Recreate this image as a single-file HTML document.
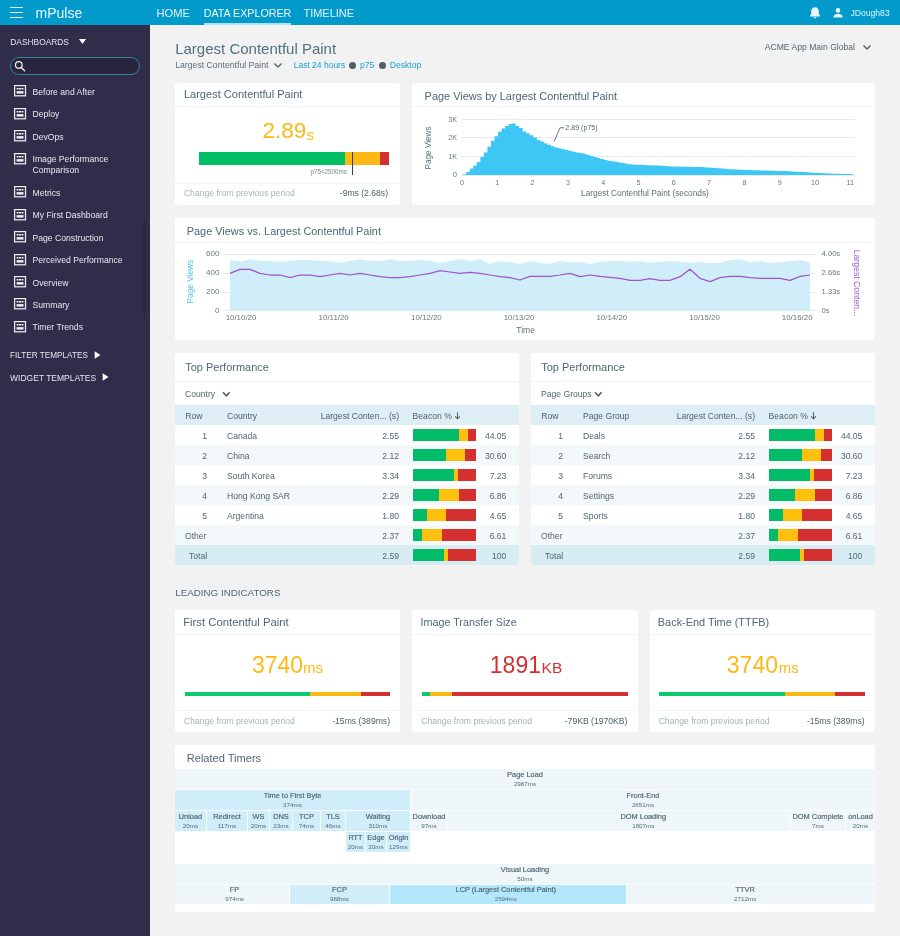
<!DOCTYPE html>
<html><head><meta charset="utf-8"><style>
html,body{margin:0;padding:0;width:900px;height:936px;overflow:hidden;background:#F2F2F2}
body{position:relative;font-family:"Liberation Sans",sans-serif}
.t{position:absolute;white-space:nowrap}
.r{position:absolute}
.card{background:#fff;border-radius:3px}
</style></head><body><div style="position:absolute;left:0;top:0;width:900px;height:936px;will-change:transform">
<div class="r" style="left:0px;top:0px;width:900px;height:25px;background:#0299CB;"></div>
<div class="r" style="left:10px;top:7px;width:13px;height:1.3px;background:#F0FAFD;"></div>
<div class="r" style="left:10px;top:12px;width:13px;height:1.3px;background:#F0FAFD;"></div>
<div class="r" style="left:10px;top:17px;width:13px;height:1.3px;background:#F0FAFD;"></div>
<div class="t" style="left:35.50px;top:6.15px;font-size:14px;line-height:14px;color:#EAF7FC;">mPulse</div>
<div class="t" style="left:156.60px;top:7.70px;font-size:11.1px;line-height:11.1px;color:#E3F5FB;">HOME</div>
<div class="t" style="left:203.80px;top:8.04px;font-size:10.7px;line-height:10.7px;color:#F2FAFD;">DATA EXPLORER</div>
<div class="t" style="left:303.50px;top:7.83px;font-size:10.95px;line-height:10.95px;color:#E3F5FB;">TIMELINE</div>
<div class="r" style="left:204px;top:23px;width:87px;height:2px;background:#A8E4FA;"></div>
<svg class="r" style="left:808px;top:6px" width="14" height="13" viewBox="0 0 14 13">
<path d="M7 1.2c-2.4 0-3.8 1.8-3.8 4.2v2.8L2 9.6v0.9h10v-0.9l-1.2-1.4V5.4C10.8 3 9.4 1.2 7 1.2z" fill="#EAF7FC"/>
<path d="M5.6 11.2h2.8c0 .8-.6 1.2-1.4 1.2s-1.4-.4-1.4-1.2z" fill="#EAF7FC"/></svg>
<svg class="r" style="left:832px;top:7px" width="12" height="12" viewBox="0 0 12 12">
<circle cx="6" cy="3.4" r="2.3" fill="#EAF7FC"/>
<path d="M1.4 10.3c0-2.2 2-3.5 4.6-3.5s4.6 1.3 4.6 3.5v0.3H1.4z" fill="#EAF7FC"/></svg>
<div class="t" style="left:850.50px;top:8.82px;font-size:8.6px;line-height:8.6px;color:#DDF2FA;">JDough83</div>
<div class="r" style="left:0px;top:25px;width:150px;height:911px;background:#302D4A;"></div>
<div class="t" style="left:10.30px;top:37.59px;font-size:8.4px;line-height:8.4px;color:#E6E5EE;">DASHBOARDS</div>
<svg class="r" style="left:78px;top:38px" width="9" height="7" viewBox="0 0 9 7"><path d="M1 1h7L4.5 6z" fill="#FFFFFF"/></svg>
<div class="r" style="left:10px;top:57px;width:128px;height:16px;border:1px solid #3B7E9C;border-radius:9px;background:#28263E"></div>
<svg class="r" style="left:13px;top:60px" width="14" height="13" viewBox="0 0 14 13"><circle cx="5.8" cy="4.9" r="3.3" fill="none" stroke="#F0F0F4" stroke-width="1.25"/><path d="M8.3 7.4L11.6 10.7" stroke="#F0F0F4" stroke-width="1.35" stroke-linecap="round"/></svg>
<svg class="r" style="left:13.7px;top:85.1px" width="13" height="12" viewBox="0 0 13 12">
<rect x="0.6" y="0.6" width="10.9" height="10.2" fill="none" stroke="#EDEDF2" stroke-width="1.25"/>
<rect x="2.6" y="3.0" width="2.0" height="1.5" fill="#EDEDF2"/><rect x="5.05" y="3.0" width="2.0" height="1.5" fill="#EDEDF2"/><rect x="7.5" y="3.0" width="2.0" height="1.5" fill="#EDEDF2"/>
<rect x="2.6" y="6.1" width="6.9" height="2.5" fill="#EDEDF2"/></svg>
<div class="t" style="left:32.50px;top:87.68px;font-size:8.65px;line-height:8.65px;color:#E8E7EF;">Before and After</div>
<svg class="r" style="left:13.7px;top:107.6px" width="13" height="12" viewBox="0 0 13 12">
<rect x="0.6" y="0.6" width="10.9" height="10.2" fill="none" stroke="#EDEDF2" stroke-width="1.25"/>
<rect x="2.6" y="3.0" width="2.0" height="1.5" fill="#EDEDF2"/><rect x="5.05" y="3.0" width="2.0" height="1.5" fill="#EDEDF2"/><rect x="7.5" y="3.0" width="2.0" height="1.5" fill="#EDEDF2"/>
<rect x="2.6" y="6.1" width="6.9" height="2.5" fill="#EDEDF2"/></svg>
<div class="t" style="left:32.50px;top:110.18px;font-size:8.65px;line-height:8.65px;color:#E8E7EF;">Deploy</div>
<svg class="r" style="left:13.7px;top:130.1px" width="13" height="12" viewBox="0 0 13 12">
<rect x="0.6" y="0.6" width="10.9" height="10.2" fill="none" stroke="#EDEDF2" stroke-width="1.25"/>
<rect x="2.6" y="3.0" width="2.0" height="1.5" fill="#EDEDF2"/><rect x="5.05" y="3.0" width="2.0" height="1.5" fill="#EDEDF2"/><rect x="7.5" y="3.0" width="2.0" height="1.5" fill="#EDEDF2"/>
<rect x="2.6" y="6.1" width="6.9" height="2.5" fill="#EDEDF2"/></svg>
<div class="t" style="left:32.50px;top:132.68px;font-size:8.65px;line-height:8.65px;color:#E8E7EF;">DevOps</div>
<svg class="r" style="left:13.7px;top:152.7px" width="13" height="12" viewBox="0 0 13 12">
<rect x="0.6" y="0.6" width="10.9" height="10.2" fill="none" stroke="#EDEDF2" stroke-width="1.25"/>
<rect x="2.6" y="3.0" width="2.0" height="1.5" fill="#EDEDF2"/><rect x="5.05" y="3.0" width="2.0" height="1.5" fill="#EDEDF2"/><rect x="7.5" y="3.0" width="2.0" height="1.5" fill="#EDEDF2"/>
<rect x="2.6" y="6.1" width="6.9" height="2.5" fill="#EDEDF2"/></svg>
<div class="t" style="left:32.50px;top:155.28px;font-size:8.65px;line-height:8.65px;color:#E8E7EF;">Image Performance</div>
<div class="t" style="left:32.50px;top:166.48px;font-size:8.65px;line-height:8.65px;color:#E8E7EF;">Comparison</div>
<svg class="r" style="left:13.7px;top:186.29999999999998px" width="13" height="12" viewBox="0 0 13 12">
<rect x="0.6" y="0.6" width="10.9" height="10.2" fill="none" stroke="#EDEDF2" stroke-width="1.25"/>
<rect x="2.6" y="3.0" width="2.0" height="1.5" fill="#EDEDF2"/><rect x="5.05" y="3.0" width="2.0" height="1.5" fill="#EDEDF2"/><rect x="7.5" y="3.0" width="2.0" height="1.5" fill="#EDEDF2"/>
<rect x="2.6" y="6.1" width="6.9" height="2.5" fill="#EDEDF2"/></svg>
<div class="t" style="left:32.50px;top:188.88px;font-size:8.65px;line-height:8.65px;color:#E8E7EF;">Metrics</div>
<svg class="r" style="left:13.7px;top:208.7px" width="13" height="12" viewBox="0 0 13 12">
<rect x="0.6" y="0.6" width="10.9" height="10.2" fill="none" stroke="#EDEDF2" stroke-width="1.25"/>
<rect x="2.6" y="3.0" width="2.0" height="1.5" fill="#EDEDF2"/><rect x="5.05" y="3.0" width="2.0" height="1.5" fill="#EDEDF2"/><rect x="7.5" y="3.0" width="2.0" height="1.5" fill="#EDEDF2"/>
<rect x="2.6" y="6.1" width="6.9" height="2.5" fill="#EDEDF2"/></svg>
<div class="t" style="left:32.50px;top:211.28px;font-size:8.65px;line-height:8.65px;color:#E8E7EF;">My First Dashboard</div>
<svg class="r" style="left:13.7px;top:231.1px" width="13" height="12" viewBox="0 0 13 12">
<rect x="0.6" y="0.6" width="10.9" height="10.2" fill="none" stroke="#EDEDF2" stroke-width="1.25"/>
<rect x="2.6" y="3.0" width="2.0" height="1.5" fill="#EDEDF2"/><rect x="5.05" y="3.0" width="2.0" height="1.5" fill="#EDEDF2"/><rect x="7.5" y="3.0" width="2.0" height="1.5" fill="#EDEDF2"/>
<rect x="2.6" y="6.1" width="6.9" height="2.5" fill="#EDEDF2"/></svg>
<div class="t" style="left:32.50px;top:233.68px;font-size:8.65px;line-height:8.65px;color:#E8E7EF;">Page Construction</div>
<svg class="r" style="left:13.7px;top:253.6px" width="13" height="12" viewBox="0 0 13 12">
<rect x="0.6" y="0.6" width="10.9" height="10.2" fill="none" stroke="#EDEDF2" stroke-width="1.25"/>
<rect x="2.6" y="3.0" width="2.0" height="1.5" fill="#EDEDF2"/><rect x="5.05" y="3.0" width="2.0" height="1.5" fill="#EDEDF2"/><rect x="7.5" y="3.0" width="2.0" height="1.5" fill="#EDEDF2"/>
<rect x="2.6" y="6.1" width="6.9" height="2.5" fill="#EDEDF2"/></svg>
<div class="t" style="left:32.50px;top:256.18px;font-size:8.65px;line-height:8.65px;color:#E8E7EF;">Perceived Performance</div>
<svg class="r" style="left:13.7px;top:276.0px" width="13" height="12" viewBox="0 0 13 12">
<rect x="0.6" y="0.6" width="10.9" height="10.2" fill="none" stroke="#EDEDF2" stroke-width="1.25"/>
<rect x="2.6" y="3.0" width="2.0" height="1.5" fill="#EDEDF2"/><rect x="5.05" y="3.0" width="2.0" height="1.5" fill="#EDEDF2"/><rect x="7.5" y="3.0" width="2.0" height="1.5" fill="#EDEDF2"/>
<rect x="2.6" y="6.1" width="6.9" height="2.5" fill="#EDEDF2"/></svg>
<div class="t" style="left:32.50px;top:278.58px;font-size:8.65px;line-height:8.65px;color:#E8E7EF;">Overview</div>
<svg class="r" style="left:13.7px;top:298.40000000000003px" width="13" height="12" viewBox="0 0 13 12">
<rect x="0.6" y="0.6" width="10.9" height="10.2" fill="none" stroke="#EDEDF2" stroke-width="1.25"/>
<rect x="2.6" y="3.0" width="2.0" height="1.5" fill="#EDEDF2"/><rect x="5.05" y="3.0" width="2.0" height="1.5" fill="#EDEDF2"/><rect x="7.5" y="3.0" width="2.0" height="1.5" fill="#EDEDF2"/>
<rect x="2.6" y="6.1" width="6.9" height="2.5" fill="#EDEDF2"/></svg>
<div class="t" style="left:32.50px;top:300.98px;font-size:8.65px;line-height:8.65px;color:#E8E7EF;">Summary</div>
<svg class="r" style="left:13.7px;top:320.90000000000003px" width="13" height="12" viewBox="0 0 13 12">
<rect x="0.6" y="0.6" width="10.9" height="10.2" fill="none" stroke="#EDEDF2" stroke-width="1.25"/>
<rect x="2.6" y="3.0" width="2.0" height="1.5" fill="#EDEDF2"/><rect x="5.05" y="3.0" width="2.0" height="1.5" fill="#EDEDF2"/><rect x="7.5" y="3.0" width="2.0" height="1.5" fill="#EDEDF2"/>
<rect x="2.6" y="6.1" width="6.9" height="2.5" fill="#EDEDF2"/></svg>
<div class="t" style="left:32.50px;top:323.48px;font-size:8.65px;line-height:8.65px;color:#E8E7EF;">Timer Trends</div>
<div class="t" style="left:10.10px;top:351.86px;font-size:8.2px;line-height:8.2px;color:#E6E5EE;">FILTER TEMPLATES</div>
<svg class="r" style="left:94px;top:351px" width="7" height="8" viewBox="0 0 7 8"><path d="M0.7 0.3v7.4L6.5 4z" fill="#FFFFFF"/></svg>
<div class="t" style="left:10.10px;top:373.60px;font-size:8.5px;line-height:8.5px;color:#E6E5EE;">WIDGET TEMPLATES</div>
<svg class="r" style="left:101.5px;top:373px" width="7" height="8" viewBox="0 0 7 8"><path d="M0.7 0.3v7.4L6.5 4z" fill="#FFFFFF"/></svg>
<div class="r" style="left:143px;top:219px;width:3px;height:99px;background:#2A2841;border-radius:1.5px"></div>
<div class="r" style="left:150px;top:25px;width:750px;height:911px;background:#F2F2F2;"></div>
<div class="t" style="left:175.20px;top:41.30px;font-size:15px;line-height:15px;color:#52707E;">Largest Contentful Paint</div>
<div class="t" style="left:175.20px;top:60.93px;font-size:8.7px;line-height:8.7px;color:#5A6E78;">Largest Contentful Paint</div>
<svg class="r" style="left:273px;top:62px" width="10" height="7" viewBox="0 0 10 7"><path d="M1.5 1.5L5 5l3.5-3.5" fill="none" stroke="#55666F" stroke-width="1.4"/></svg>
<div class="t" style="left:293.70px;top:61.10px;font-size:8.5px;line-height:8.5px;color:#1B9FD3;">Last 24 hours</div>
<div class="r" style="left:349px;top:61.5px;width:7px;height:7px;border-radius:50%;background:#4E5E67"></div>
<div class="t" style="left:360.00px;top:61.10px;font-size:8.5px;line-height:8.5px;color:#1B9FD3;">p75</div>
<div class="r" style="left:378.7px;top:61.5px;width:7px;height:7px;border-radius:50%;background:#4E5E67"></div>
<div class="t" style="left:389.70px;top:61.02px;font-size:8.6px;line-height:8.6px;color:#1B9FD3;">Desktop</div>
<div class="t" style="left:455.00px;width:400px;text-align:right;top:43.42px;font-size:8.6px;line-height:8.6px;color:#55676F;">ACME App Main Global</div>
<svg class="r" style="left:862px;top:44px" width="10" height="7" viewBox="0 0 10 7"><path d="M1.5 1.5L5 5l3.5-3.5" fill="none" stroke="#55666F" stroke-width="1.5"/></svg>
<div class="r card" style="left:175px;top:83px;width:225px;height:122px"></div>
<div class="t" style="left:183.90px;top:88.64px;font-size:11.05px;line-height:11.05px;color:#4D6876;">Largest Contentful Paint</div>
<div class="r" style="left:175px;top:106px;width:225px;height:1px;background:#F1F3F4;"></div>
<div class="t" style="left:262.50px;top:120.45px;font-size:22.5px;line-height:22.5px;color:#FDB913;">2.89</div>
<div class="t" style="left:306.50px;top:126.80px;font-size:15px;line-height:15px;color:#FDB913;">s</div>
<div class="r" style="left:199px;top:152px;width:145.5px;height:12.5px;background:#00BE64;"></div>
<div class="r" style="left:344.5px;top:152px;width:35px;height:12.5px;background:#FDB913;"></div>
<div class="r" style="left:379.5px;top:152px;width:9.5px;height:12.5px;background:#D3302F;"></div>
<div class="r" style="left:352px;top:152px;width:1px;height:22.5px;background:#33404A;"></div>
<div class="t" style="left:-53.00px;width:400px;text-align:right;top:168.67px;font-size:6.3px;line-height:6.3px;color:#7B8A92;">p75&lt;2500ms</div>
<div class="r" style="left:175px;top:183px;width:225px;height:1px;background:#F3F5F6;"></div>
<div class="t" style="left:183.90px;top:189.22px;font-size:8.6px;line-height:8.6px;color:#A3B3BB;">Change from previous period</div>
<div class="t" style="left:-12.00px;width:400px;text-align:right;top:189.22px;font-size:8.6px;line-height:8.6px;color:#4F616B;">-9ms (2.68s)</div>
<div class="r card" style="left:412px;top:83px;width:463px;height:122px"></div>
<div class="t" style="left:424.60px;top:91.03px;font-size:10.95px;line-height:10.95px;color:#4D6876;">Page Views by Largest Contentful Paint</div>
<div class="r" style="left:412px;top:106px;width:463px;height:1px;background:#F1F3F4;"></div>
<div class="r" style="left:461px;top:174.5px;width:394px;height:1px;background:#E6ECEF;"></div>
<div class="t" style="left:57.00px;width:400px;text-align:right;top:171.40px;font-size:7.2px;line-height:7.2px;color:#667882;">0</div>
<div class="r" style="left:461px;top:156.0px;width:394px;height:1px;background:#E6ECEF;"></div>
<div class="t" style="left:57.00px;width:400px;text-align:right;top:152.77px;font-size:7.2px;line-height:7.2px;color:#667882;">1K</div>
<div class="r" style="left:461px;top:137.0px;width:394px;height:1px;background:#E6ECEF;"></div>
<div class="t" style="left:57.00px;width:400px;text-align:right;top:134.14px;font-size:7.2px;line-height:7.2px;color:#667882;">2K</div>
<div class="r" style="left:461px;top:118.5px;width:394px;height:1px;background:#E6ECEF;"></div>
<div class="t" style="left:57.00px;width:400px;text-align:right;top:115.51px;font-size:7.2px;line-height:7.2px;color:#667882;">3K</div>
<div class="t" style="left:262.00px;width:400px;text-align:center;top:178.50px;font-size:7.2px;line-height:7.2px;color:#667882;">0</div>
<div class="t" style="left:297.30px;width:400px;text-align:center;top:178.50px;font-size:7.2px;line-height:7.2px;color:#667882;">1</div>
<div class="t" style="left:332.60px;width:400px;text-align:center;top:178.50px;font-size:7.2px;line-height:7.2px;color:#667882;">2</div>
<div class="t" style="left:367.90px;width:400px;text-align:center;top:178.50px;font-size:7.2px;line-height:7.2px;color:#667882;">3</div>
<div class="t" style="left:403.20px;width:400px;text-align:center;top:178.50px;font-size:7.2px;line-height:7.2px;color:#667882;">4</div>
<div class="t" style="left:438.50px;width:400px;text-align:center;top:178.50px;font-size:7.2px;line-height:7.2px;color:#667882;">5</div>
<div class="t" style="left:473.80px;width:400px;text-align:center;top:178.50px;font-size:7.2px;line-height:7.2px;color:#667882;">6</div>
<div class="t" style="left:509.10px;width:400px;text-align:center;top:178.50px;font-size:7.2px;line-height:7.2px;color:#667882;">7</div>
<div class="t" style="left:544.40px;width:400px;text-align:center;top:178.50px;font-size:7.2px;line-height:7.2px;color:#667882;">8</div>
<div class="t" style="left:579.70px;width:400px;text-align:center;top:178.50px;font-size:7.2px;line-height:7.2px;color:#667882;">9</div>
<div class="t" style="left:615.00px;width:400px;text-align:center;top:178.50px;font-size:7.2px;line-height:7.2px;color:#667882;">10</div>
<div class="t" style="left:650.30px;width:400px;text-align:center;top:178.50px;font-size:7.2px;line-height:7.2px;color:#667882;">11</div>
<div class="t" style="left:445.00px;width:400px;text-align:center;top:188.97px;font-size:8.3px;line-height:8.3px;color:#5E717B;">Largest Contentful Paint (seconds)</div>
<div class="t" style="left:407.5px;top:145.3px;width:40px;height:9px;font-size:8.2px;line-height:9px;color:#5E717B;text-align:center;transform:rotate(-90deg);transform-origin:20px 4.5px;width:40px;left:407.5px">Page Views</div>
<svg class="r" style="left:0;top:0" width="900" height="936"><polygon points="462.71,174.90 462.71,174.32 466.24,174.32 466.24,172.11 469.77,172.11 469.77,168.53 473.30,168.53 473.30,165.55 476.83,165.55 476.83,162.12 480.36,162.12 480.36,157.09 483.89,157.09 483.89,152.51 487.42,152.51 487.42,146.69 490.95,146.69 490.95,140.96 494.48,140.96 494.48,136.15 498.01,136.15 498.01,131.75 501.54,131.75 501.54,128.51 505.07,128.51 505.07,125.90 508.60,125.90 508.60,124.11 512.13,124.11 512.13,123.48 515.66,123.48 515.66,126.05 519.19,126.05 519.19,128.08 522.72,128.08 522.72,131.49 526.25,131.49 526.25,133.17 529.78,133.17 529.78,135.34 533.31,135.34 533.31,137.60 536.84,137.60 536.84,140.01 540.37,140.01 540.37,141.59 543.90,141.59 543.90,143.17 547.43,143.17 547.43,144.73 550.96,144.73 550.96,146.30 554.49,146.30 554.49,147.39 558.02,147.39 558.02,148.29 561.55,148.29 561.55,149.18 565.08,149.18 565.08,150.05 568.61,150.05 568.61,150.92 572.14,150.92 572.14,151.74 575.67,151.74 575.67,152.38 579.20,152.38 579.20,153.02 582.73,153.02 582.73,153.66 586.26,153.66 586.26,154.65 589.79,154.65 589.79,155.79 593.32,155.79 593.32,156.93 596.85,156.93 596.85,158.01 600.38,158.01 600.38,159.06 603.91,159.06 603.91,160.05 607.44,160.05 607.44,160.64 610.97,160.64 610.97,161.23 614.50,161.23 614.50,161.81 618.03,161.81 618.03,162.42 621.56,162.42 621.56,163.04 625.09,163.04 625.09,163.66 628.62,163.66 628.62,164.28 632.15,164.28 632.15,164.47 635.68,164.47 635.68,164.65 639.21,164.65 639.21,164.84 642.74,164.84 642.74,165.03 646.27,165.03 646.27,165.16 649.80,165.16 649.80,165.29 653.33,165.29 653.33,165.42 656.86,165.42 656.86,165.55 660.39,165.55 660.39,165.76 663.92,165.76 663.92,166.01 667.45,166.01 667.45,166.26 670.98,166.26 670.98,166.39 674.51,166.39 674.51,166.47 678.04,166.47 678.04,166.55 681.57,166.55 681.57,166.64 685.10,166.64 685.10,166.72 688.63,166.72 688.63,166.80 692.16,166.80 692.16,166.88 695.69,166.88 695.69,166.97 699.22,166.97 699.22,167.05 702.75,167.05 702.75,167.24 706.28,167.24 706.28,167.47 709.81,167.47 709.81,167.70 713.34,167.70 713.34,167.94 716.87,167.94 716.87,168.22 720.40,168.22 720.40,168.53 723.93,168.53 723.93,168.85 727.46,168.85 727.46,169.14 730.99,169.14 730.99,169.30 734.52,169.30 734.52,169.47 738.05,169.47 738.05,169.63 741.58,169.63 741.58,169.79 745.11,169.79 745.11,169.96 748.64,169.96 748.64,170.10 752.17,170.10 752.17,170.20 755.70,170.20 755.70,170.30 759.23,170.30 759.23,170.40 762.76,170.40 762.76,170.50 766.29,170.50 766.29,170.60 769.82,170.60 769.82,170.71 773.35,170.71 773.35,170.81 776.88,170.81 776.88,170.91 780.41,170.91 780.41,171.01 783.94,171.01 783.94,171.11 787.47,171.11 787.47,171.25 791.00,171.25 791.00,171.45 794.53,171.45 794.53,171.64 798.06,171.64 798.06,171.84 801.59,171.84 801.59,172.04 805.12,172.04 805.12,172.23 808.65,172.23 808.65,172.43 812.18,172.43 812.18,172.63 815.71,172.63 815.71,172.83 819.24,172.83 819.24,173.03 822.77,173.03 822.77,173.23 826.30,173.23 826.30,173.42 829.83,173.42 829.83,173.57 833.36,173.57 833.36,173.72 836.89,173.72 836.89,173.87 840.42,173.87 840.42,173.98 843.95,173.98 843.95,174.04 847.48,174.04 847.48,174.09 851.01,174.09 851.01,174.14 853.83,174.14 853.83,174.90" fill="#3EC7F4"/><path d="M554.1 141.6L560 127.8H564.1" fill="none" stroke="#55666F" stroke-width="0.9"/></svg>
<div class="t" style="left:565.30px;top:124.89px;font-size:7.1px;line-height:7.1px;color:#55666F;">2.89 (p75)</div>
<div class="r card" style="left:175px;top:218px;width:700px;height:122px"></div>
<div class="t" style="left:186.80px;top:226.07px;font-size:10.9px;line-height:10.9px;color:#4D6876;">Page Views vs. Largest Contentful Paint</div>
<div class="r" style="left:175px;top:242px;width:700px;height:1px;background:#F1F3F4;"></div>
<div class="r" style="left:222.8px;top:310.0px;width:593.2px;height:1px;background:#E6ECEF;"></div>
<div class="t" style="left:-180.60px;width:400px;text-align:right;top:306.74px;font-size:8.1px;line-height:8.1px;color:#667882;">0</div>
<div class="t" style="left:821.60px;top:307.07px;font-size:7.6px;line-height:7.6px;color:#667882;">0s</div>
<div class="r" style="left:222.8px;top:291.5px;width:593.2px;height:1px;background:#E6ECEF;"></div>
<div class="t" style="left:-180.60px;width:400px;text-align:right;top:287.84px;font-size:8.1px;line-height:8.1px;color:#667882;">200</div>
<div class="t" style="left:821.60px;top:288.17px;font-size:7.6px;line-height:7.6px;color:#667882;">1.33s</div>
<div class="r" style="left:222.8px;top:272.5px;width:593.2px;height:1px;background:#E6ECEF;"></div>
<div class="t" style="left:-180.60px;width:400px;text-align:right;top:268.94px;font-size:8.1px;line-height:8.1px;color:#667882;">400</div>
<div class="t" style="left:821.60px;top:269.27px;font-size:7.6px;line-height:7.6px;color:#667882;">2.66s</div>
<div class="r" style="left:222.8px;top:253.5px;width:593.2px;height:1px;background:#E6ECEF;"></div>
<div class="t" style="left:-180.60px;width:400px;text-align:right;top:250.04px;font-size:8.1px;line-height:8.1px;color:#667882;">600</div>
<div class="t" style="left:821.60px;top:250.37px;font-size:7.6px;line-height:7.6px;color:#667882;">4.00s</div>
<svg class="r" style="left:0;top:0" width="900" height="936"><polygon points="230,310.7 230,260 240,261.7 250,259.3 260,260.7 270,261.3 280,261.7 290,261 300,260 310,260 320,260.7 330,261.3 340,262.7 350,260.7 360,259.3 370,260.7 380,261.3 390,259.3 400,261.3 410,261 420,260 430,261 440,262.7 450,261 460,259.3 470,261 480,259.3 490,264 500,261 510,262.3 520,264 530,261 540,262.7 550,264 560,261 570,262.3 580,261.7 590,264 600,261.7 610,261 620,261 630,261.7 640,261 650,262.7 660,261.7 670,261 680,261.7 690,262.7 700,261.7 710,263.3 720,262.7 730,260 740,259.3 750,262.3 760,261 770,262.7 780,262.3 790,261 800,260 810,262.3 810,310.7" fill="#CFEEFA"/><polyline points="230,273.3 240,269.3 250,269.3 260,273.3 270,275 280,275 290,277.7 300,275 310,275 320,276.7 330,275 340,273.3 350,275 360,273.3 370,275 380,276.7 390,277.7 400,277.7 410,276.7 420,275 430,273.3 440,270.7 450,272 460,273.3 470,272.3 480,273.3 490,275 500,276.7 510,277.7 520,280 530,276.3 540,276.3 550,276.3 560,275 570,273.3 580,276.7 590,275 600,276.3 610,277.3 620,278.3 630,280.3 640,280.3 650,278.7 660,280.3 670,280.3 680,276.7 690,269.3 700,278.3 710,281.7 720,277.7 730,276.3 740,276.3 750,277.7 760,278.3 770,278.3 780,278.3 790,280.3 800,276.3 810,275" fill="none" stroke="#A052C8" stroke-width="1.25" stroke-linejoin="round"/></svg>
<div class="t" style="left:41.00px;width:400px;text-align:center;top:313.61px;font-size:7.9px;line-height:7.9px;color:#667882;">10/10/20</div>
<div class="t" style="left:133.70px;width:400px;text-align:center;top:313.61px;font-size:7.9px;line-height:7.9px;color:#667882;">10/11/20</div>
<div class="t" style="left:226.40px;width:400px;text-align:center;top:313.61px;font-size:7.9px;line-height:7.9px;color:#667882;">10/12/20</div>
<div class="t" style="left:319.10px;width:400px;text-align:center;top:313.61px;font-size:7.9px;line-height:7.9px;color:#667882;">10/13/20</div>
<div class="t" style="left:411.80px;width:400px;text-align:center;top:313.61px;font-size:7.9px;line-height:7.9px;color:#667882;">10/14/20</div>
<div class="t" style="left:504.50px;width:400px;text-align:center;top:313.61px;font-size:7.9px;line-height:7.9px;color:#667882;">10/15/20</div>
<div class="t" style="left:597.20px;width:400px;text-align:center;top:313.61px;font-size:7.9px;line-height:7.9px;color:#667882;">10/16/20</div>
<div class="t" style="left:325.60px;width:400px;text-align:center;top:326.10px;font-size:8.5px;line-height:8.5px;color:#5E717B;">Time</div>
<div class="t" style="left:170px;top:279.1px;width:40px;height:9px;font-size:8.3px;line-height:9px;color:#4FC3F0;text-align:center;transform:rotate(-90deg);transform-origin:20px 4.5px">Page Views</div>
<div class="t" style="left:817px;top:278px;width:80px;height:10px;font-size:8.7px;line-height:10px;color:#A45BD0;text-align:center;transform:rotate(90deg);transform-origin:40px 5px">Largest Conten...</div>
<div class="r card" style="left:175px;top:353px;width:344px;height:212px;overflow:hidden">
<div class="r" style="left:0;top:52px;width:344px;height:20px;background:#DEEEF5"></div><div class="r" style="left:0;top:92px;width:344px;height:20px;background:#F3F8FB"></div><div class="r" style="left:0;top:132px;width:344px;height:20px;background:#F3F8FB"></div><div class="r" style="left:0;top:172px;width:344px;height:20px;background:#F3F8FB"></div><div class="r" style="left:0;top:192px;width:344px;height:20px;background:#D8ECF3"></div>
</div>
<div class="t" style="left:185.20px;top:361.99px;font-size:11.0px;line-height:11.0px;color:#4D6876;">Top Performance</div>
<div class="r" style="left:175px;top:381px;width:344px;height:1px;background:#F1F3F4;"></div>
<div class="t" style="left:185.00px;top:389.82px;font-size:8.6px;line-height:8.6px;color:#52656F;">Country</div>
<svg class="r" style="left:222.4px;top:391px" width="9" height="7" viewBox="0 0 9 7"><path d="M1 1.2L4.3 4.8 7.6 1.2" fill="none" stroke="#4A5D67" stroke-width="1.5"/></svg>
<div class="t" style="left:185.30px;top:411.82px;font-size:8.6px;line-height:8.6px;color:#4E626C;">Row</div>
<div class="t" style="left:227.00px;top:411.82px;font-size:8.6px;line-height:8.6px;color:#4E626C;">Country</div>
<div class="t" style="left:-1.00px;width:400px;text-align:right;top:411.82px;font-size:8.6px;line-height:8.6px;color:#4E626C;">Largest Conten... (s)</div>
<div class="t" style="left:412.60px;top:411.82px;font-size:8.6px;line-height:8.6px;color:#4E626C;">Beacon %</div>
<svg class="r" style="left:453.6px;top:412px" width="7" height="8" viewBox="0 0 7 8"><path d="M3.5 0.2V6.8M1.1 4.3L3.5 6.8 5.9 4.3" fill="none" stroke="#4E626C" stroke-width="1.05"/></svg>
<div class="t" style="left:-192.90px;width:400px;text-align:right;top:431.62px;font-size:8.6px;line-height:8.6px;color:#52656F;">1</div>
<div class="t" style="left:227.00px;top:431.62px;font-size:8.6px;line-height:8.6px;color:#52656F;">Canada</div>
<div class="t" style="left:-1.00px;width:400px;text-align:right;top:431.62px;font-size:8.6px;line-height:8.6px;color:#52656F;">2.55</div>
<div class="r" style="left:412.7px;top:429px;width:46px;height:12px;background:#02BC68;"></div>
<div class="r" style="left:458.7px;top:429px;width:9px;height:12px;background:#FEC00C;"></div>
<div class="r" style="left:467.7px;top:429px;width:8px;height:12px;background:#D43030;"></div>
<div class="t" style="left:106.40px;width:400px;text-align:right;top:431.62px;font-size:8.6px;line-height:8.6px;color:#52656F;">44.05</div>
<div class="t" style="left:-192.90px;width:400px;text-align:right;top:451.62px;font-size:8.6px;line-height:8.6px;color:#52656F;">2</div>
<div class="t" style="left:227.00px;top:451.62px;font-size:8.6px;line-height:8.6px;color:#52656F;">China</div>
<div class="t" style="left:-1.00px;width:400px;text-align:right;top:451.62px;font-size:8.6px;line-height:8.6px;color:#52656F;">2.12</div>
<div class="r" style="left:412.7px;top:449px;width:33px;height:12px;background:#02BC68;"></div>
<div class="r" style="left:445.7px;top:449px;width:19.4px;height:12px;background:#FEC00C;"></div>
<div class="r" style="left:465.1px;top:449px;width:10.6px;height:12px;background:#D43030;"></div>
<div class="t" style="left:106.40px;width:400px;text-align:right;top:451.62px;font-size:8.6px;line-height:8.6px;color:#52656F;">30.60</div>
<div class="t" style="left:-192.90px;width:400px;text-align:right;top:471.62px;font-size:8.6px;line-height:8.6px;color:#52656F;">3</div>
<div class="t" style="left:227.00px;top:471.62px;font-size:8.6px;line-height:8.6px;color:#52656F;">South Korea</div>
<div class="t" style="left:-1.00px;width:400px;text-align:right;top:471.62px;font-size:8.6px;line-height:8.6px;color:#52656F;">3.34</div>
<div class="r" style="left:412.7px;top:469px;width:41.2px;height:12px;background:#02BC68;"></div>
<div class="r" style="left:453.9px;top:469px;width:4px;height:12px;background:#FEC00C;"></div>
<div class="r" style="left:457.9px;top:469px;width:17.8px;height:12px;background:#D43030;"></div>
<div class="t" style="left:106.40px;width:400px;text-align:right;top:471.62px;font-size:8.6px;line-height:8.6px;color:#52656F;">7.23</div>
<div class="t" style="left:-192.90px;width:400px;text-align:right;top:491.62px;font-size:8.6px;line-height:8.6px;color:#52656F;">4</div>
<div class="t" style="left:227.00px;top:491.62px;font-size:8.6px;line-height:8.6px;color:#52656F;">Hong Kong SAR</div>
<div class="t" style="left:-1.00px;width:400px;text-align:right;top:491.62px;font-size:8.6px;line-height:8.6px;color:#52656F;">2.29</div>
<div class="r" style="left:412.7px;top:489px;width:26.4px;height:12px;background:#02BC68;"></div>
<div class="r" style="left:439.1px;top:489px;width:19.6px;height:12px;background:#FEC00C;"></div>
<div class="r" style="left:458.7px;top:489px;width:17px;height:12px;background:#D43030;"></div>
<div class="t" style="left:106.40px;width:400px;text-align:right;top:491.62px;font-size:8.6px;line-height:8.6px;color:#52656F;">6.86</div>
<div class="t" style="left:-192.90px;width:400px;text-align:right;top:511.62px;font-size:8.6px;line-height:8.6px;color:#52656F;">5</div>
<div class="t" style="left:227.00px;top:511.62px;font-size:8.6px;line-height:8.6px;color:#52656F;">Argentina</div>
<div class="t" style="left:-1.00px;width:400px;text-align:right;top:511.62px;font-size:8.6px;line-height:8.6px;color:#52656F;">1.80</div>
<div class="r" style="left:412.7px;top:509px;width:14.4px;height:12px;background:#02BC68;"></div>
<div class="r" style="left:427.1px;top:509px;width:18.8px;height:12px;background:#FEC00C;"></div>
<div class="r" style="left:445.9px;top:509px;width:29.8px;height:12px;background:#D43030;"></div>
<div class="t" style="left:106.40px;width:400px;text-align:right;top:511.62px;font-size:8.6px;line-height:8.6px;color:#52656F;">4.65</div>
<div class="t" style="left:185.00px;top:531.62px;font-size:8.6px;line-height:8.6px;color:#52656F;">Other</div>
<div class="t" style="left:-1.00px;width:400px;text-align:right;top:531.62px;font-size:8.6px;line-height:8.6px;color:#52656F;">2.37</div>
<div class="r" style="left:412.7px;top:529px;width:9.2px;height:12px;background:#02BC68;"></div>
<div class="r" style="left:421.9px;top:529px;width:20px;height:12px;background:#FEC00C;"></div>
<div class="r" style="left:441.9px;top:529px;width:33.8px;height:12px;background:#D43030;"></div>
<div class="t" style="left:106.40px;width:400px;text-align:right;top:531.62px;font-size:8.6px;line-height:8.6px;color:#52656F;">6.61</div>
<div class="t" style="left:189.00px;top:551.62px;font-size:8.6px;line-height:8.6px;color:#52656F;">Total</div>
<div class="t" style="left:-1.00px;width:400px;text-align:right;top:551.62px;font-size:8.6px;line-height:8.6px;color:#52656F;">2.59</div>
<div class="r" style="left:413.2px;top:549px;width:30.8px;height:12px;background:#02BC68;"></div>
<div class="r" style="left:444.0px;top:549px;width:4px;height:12px;background:#FEC00C;"></div>
<div class="r" style="left:448.0px;top:549px;width:28.2px;height:12px;background:#D43030;"></div>
<div class="t" style="left:106.40px;width:400px;text-align:right;top:551.62px;font-size:8.6px;line-height:8.6px;color:#52656F;">100</div>
<div class="r card" style="left:531px;top:353px;width:344px;height:212px;overflow:hidden">
<div class="r" style="left:0;top:52px;width:344px;height:20px;background:#DEEEF5"></div><div class="r" style="left:0;top:92px;width:344px;height:20px;background:#F3F8FB"></div><div class="r" style="left:0;top:132px;width:344px;height:20px;background:#F3F8FB"></div><div class="r" style="left:0;top:172px;width:344px;height:20px;background:#F3F8FB"></div><div class="r" style="left:0;top:192px;width:344px;height:20px;background:#D8ECF3"></div>
</div>
<div class="t" style="left:541.20px;top:361.99px;font-size:11.0px;line-height:11.0px;color:#4D6876;">Top Performance</div>
<div class="r" style="left:531px;top:381px;width:344px;height:1px;background:#F1F3F4;"></div>
<div class="t" style="left:541.00px;top:389.82px;font-size:8.6px;line-height:8.6px;color:#52656F;">Page Groups</div>
<svg class="r" style="left:594.4px;top:391px" width="9" height="7" viewBox="0 0 9 7"><path d="M1 1.2L4.3 4.8 7.6 1.2" fill="none" stroke="#4A5D67" stroke-width="1.5"/></svg>
<div class="t" style="left:541.30px;top:411.82px;font-size:8.6px;line-height:8.6px;color:#4E626C;">Row</div>
<div class="t" style="left:583.00px;top:411.82px;font-size:8.6px;line-height:8.6px;color:#4E626C;">Page Group</div>
<div class="t" style="left:355.00px;width:400px;text-align:right;top:411.82px;font-size:8.6px;line-height:8.6px;color:#4E626C;">Largest Conten... (s)</div>
<div class="t" style="left:768.60px;top:411.82px;font-size:8.6px;line-height:8.6px;color:#4E626C;">Beacon %</div>
<svg class="r" style="left:809.6px;top:412px" width="7" height="8" viewBox="0 0 7 8"><path d="M3.5 0.2V6.8M1.1 4.3L3.5 6.8 5.9 4.3" fill="none" stroke="#4E626C" stroke-width="1.05"/></svg>
<div class="t" style="left:163.10px;width:400px;text-align:right;top:431.62px;font-size:8.6px;line-height:8.6px;color:#52656F;">1</div>
<div class="t" style="left:583.00px;top:431.62px;font-size:8.6px;line-height:8.6px;color:#52656F;">Deals</div>
<div class="t" style="left:355.00px;width:400px;text-align:right;top:431.62px;font-size:8.6px;line-height:8.6px;color:#52656F;">2.55</div>
<div class="r" style="left:768.7px;top:429px;width:46px;height:12px;background:#02BC68;"></div>
<div class="r" style="left:814.7px;top:429px;width:9px;height:12px;background:#FEC00C;"></div>
<div class="r" style="left:823.7px;top:429px;width:8px;height:12px;background:#D43030;"></div>
<div class="t" style="left:462.40px;width:400px;text-align:right;top:431.62px;font-size:8.6px;line-height:8.6px;color:#52656F;">44.05</div>
<div class="t" style="left:163.10px;width:400px;text-align:right;top:451.62px;font-size:8.6px;line-height:8.6px;color:#52656F;">2</div>
<div class="t" style="left:583.00px;top:451.62px;font-size:8.6px;line-height:8.6px;color:#52656F;">Search</div>
<div class="t" style="left:355.00px;width:400px;text-align:right;top:451.62px;font-size:8.6px;line-height:8.6px;color:#52656F;">2.12</div>
<div class="r" style="left:768.7px;top:449px;width:33px;height:12px;background:#02BC68;"></div>
<div class="r" style="left:801.7px;top:449px;width:19.4px;height:12px;background:#FEC00C;"></div>
<div class="r" style="left:821.1px;top:449px;width:10.6px;height:12px;background:#D43030;"></div>
<div class="t" style="left:462.40px;width:400px;text-align:right;top:451.62px;font-size:8.6px;line-height:8.6px;color:#52656F;">30.60</div>
<div class="t" style="left:163.10px;width:400px;text-align:right;top:471.62px;font-size:8.6px;line-height:8.6px;color:#52656F;">3</div>
<div class="t" style="left:583.00px;top:471.62px;font-size:8.6px;line-height:8.6px;color:#52656F;">Forums</div>
<div class="t" style="left:355.00px;width:400px;text-align:right;top:471.62px;font-size:8.6px;line-height:8.6px;color:#52656F;">3.34</div>
<div class="r" style="left:768.7px;top:469px;width:41.2px;height:12px;background:#02BC68;"></div>
<div class="r" style="left:809.9px;top:469px;width:4px;height:12px;background:#FEC00C;"></div>
<div class="r" style="left:813.9px;top:469px;width:17.8px;height:12px;background:#D43030;"></div>
<div class="t" style="left:462.40px;width:400px;text-align:right;top:471.62px;font-size:8.6px;line-height:8.6px;color:#52656F;">7.23</div>
<div class="t" style="left:163.10px;width:400px;text-align:right;top:491.62px;font-size:8.6px;line-height:8.6px;color:#52656F;">4</div>
<div class="t" style="left:583.00px;top:491.62px;font-size:8.6px;line-height:8.6px;color:#52656F;">Settings</div>
<div class="t" style="left:355.00px;width:400px;text-align:right;top:491.62px;font-size:8.6px;line-height:8.6px;color:#52656F;">2.29</div>
<div class="r" style="left:768.7px;top:489px;width:26.4px;height:12px;background:#02BC68;"></div>
<div class="r" style="left:795.1px;top:489px;width:19.6px;height:12px;background:#FEC00C;"></div>
<div class="r" style="left:814.7px;top:489px;width:17px;height:12px;background:#D43030;"></div>
<div class="t" style="left:462.40px;width:400px;text-align:right;top:491.62px;font-size:8.6px;line-height:8.6px;color:#52656F;">6.86</div>
<div class="t" style="left:163.10px;width:400px;text-align:right;top:511.62px;font-size:8.6px;line-height:8.6px;color:#52656F;">5</div>
<div class="t" style="left:583.00px;top:511.62px;font-size:8.6px;line-height:8.6px;color:#52656F;">Sports</div>
<div class="t" style="left:355.00px;width:400px;text-align:right;top:511.62px;font-size:8.6px;line-height:8.6px;color:#52656F;">1.80</div>
<div class="r" style="left:768.7px;top:509px;width:14.4px;height:12px;background:#02BC68;"></div>
<div class="r" style="left:783.1px;top:509px;width:18.8px;height:12px;background:#FEC00C;"></div>
<div class="r" style="left:801.9px;top:509px;width:29.8px;height:12px;background:#D43030;"></div>
<div class="t" style="left:462.40px;width:400px;text-align:right;top:511.62px;font-size:8.6px;line-height:8.6px;color:#52656F;">4.65</div>
<div class="t" style="left:541.00px;top:531.62px;font-size:8.6px;line-height:8.6px;color:#52656F;">Other</div>
<div class="t" style="left:355.00px;width:400px;text-align:right;top:531.62px;font-size:8.6px;line-height:8.6px;color:#52656F;">2.37</div>
<div class="r" style="left:768.7px;top:529px;width:9.2px;height:12px;background:#02BC68;"></div>
<div class="r" style="left:777.9px;top:529px;width:20px;height:12px;background:#FEC00C;"></div>
<div class="r" style="left:797.9px;top:529px;width:33.8px;height:12px;background:#D43030;"></div>
<div class="t" style="left:462.40px;width:400px;text-align:right;top:531.62px;font-size:8.6px;line-height:8.6px;color:#52656F;">6.61</div>
<div class="t" style="left:545.00px;top:551.62px;font-size:8.6px;line-height:8.6px;color:#52656F;">Total</div>
<div class="t" style="left:355.00px;width:400px;text-align:right;top:551.62px;font-size:8.6px;line-height:8.6px;color:#52656F;">2.59</div>
<div class="r" style="left:769.2px;top:549px;width:30.8px;height:12px;background:#02BC68;"></div>
<div class="r" style="left:800.0px;top:549px;width:4px;height:12px;background:#FEC00C;"></div>
<div class="r" style="left:804.0px;top:549px;width:28.2px;height:12px;background:#D43030;"></div>
<div class="t" style="left:462.40px;width:400px;text-align:right;top:551.62px;font-size:8.6px;line-height:8.6px;color:#52656F;">100</div>
<div class="r card" style="left:175px;top:610px;width:225.33px;height:122px"></div>
<div class="t" style="left:183.20px;top:616.63px;font-size:11.3px;line-height:11.3px;color:#4D6876;">First Contentful Paint</div>
<div class="r" style="left:175px;top:634px;width:225.33px;height:1px;background:#F1F3F4;"></div>
<div class="t" style="left:252.00px;top:653.53px;font-size:23px;line-height:23px;color:#FDB913;">3740</div>
<div class="t" style="left:303.00px;top:660.30px;font-size:15px;line-height:15px;color:#FDB913;">ms</div>
<div class="r" style="left:184.8px;top:692px;width:125.2px;height:4px;background:#0CCB6F;"></div>
<div class="r" style="left:310.0px;top:692px;width:50.8px;height:4px;background:#FDB913;"></div>
<div class="r" style="left:360.8px;top:692px;width:29.2px;height:4px;background:#D3302F;"></div>
<div class="r" style="left:175px;top:710px;width:225.33px;height:1px;background:#F3F5F6;"></div>
<div class="t" style="left:184.00px;top:716.52px;font-size:8.6px;line-height:8.6px;color:#A3B3BB;">Change from previous period</div>
<div class="t" style="left:-10.00px;width:400px;text-align:right;top:716.52px;font-size:8.6px;line-height:8.6px;color:#4F616B;">-15ms (389ms)</div>
<div class="r card" style="left:412.33px;top:610px;width:225.33px;height:122px"></div>
<div class="t" style="left:420.53px;top:617.10px;font-size:10.75px;line-height:10.75px;color:#4D6876;">Image Transfer Size</div>
<div class="r" style="left:412.33px;top:634px;width:225.33px;height:1px;background:#F1F3F4;"></div>
<div class="t" style="left:489.80px;top:653.53px;font-size:23px;line-height:23px;color:#D3302F;">1891</div>
<div class="t" style="left:541.60px;top:659.88px;font-size:15.5px;line-height:15.5px;color:#D3302F;">KB</div>
<div class="r" style="left:422.13px;top:692px;width:8px;height:4px;background:#0CCB6F;"></div>
<div class="r" style="left:430.13px;top:692px;width:22px;height:4px;background:#FDB913;"></div>
<div class="r" style="left:452.13px;top:692px;width:175.5px;height:4px;background:#D3302F;"></div>
<div class="r" style="left:412.33px;top:710px;width:225.33px;height:1px;background:#F3F5F6;"></div>
<div class="t" style="left:421.33px;top:716.52px;font-size:8.6px;line-height:8.6px;color:#A3B3BB;">Change from previous period</div>
<div class="t" style="left:227.33px;width:400px;text-align:right;top:716.52px;font-size:8.6px;line-height:8.6px;color:#4F616B;">-79KB (1970KB)</div>
<div class="r card" style="left:649.67px;top:610px;width:225.33px;height:122px"></div>
<div class="t" style="left:657.87px;top:616.97px;font-size:10.9px;line-height:10.9px;color:#4D6876;">Back-End Time (TTFB)</div>
<div class="r" style="left:649.67px;top:634px;width:225.33px;height:1px;background:#F1F3F4;"></div>
<div class="t" style="left:726.80px;top:653.53px;font-size:23px;line-height:23px;color:#FDB913;">3740</div>
<div class="t" style="left:778.80px;top:660.30px;font-size:15px;line-height:15px;color:#FDB913;">ms</div>
<div class="r" style="left:659.4699999999999px;top:692px;width:125.2px;height:4px;background:#0CCB6F;"></div>
<div class="r" style="left:784.67px;top:692px;width:50.4px;height:4px;background:#FDB913;"></div>
<div class="r" style="left:835.0699999999999px;top:692px;width:29.6px;height:4px;background:#D3302F;"></div>
<div class="r" style="left:649.67px;top:710px;width:225.33px;height:1px;background:#F3F5F6;"></div>
<div class="t" style="left:658.67px;top:716.52px;font-size:8.6px;line-height:8.6px;color:#A3B3BB;">Change from previous period</div>
<div class="t" style="left:464.67px;width:400px;text-align:right;top:716.52px;font-size:8.6px;line-height:8.6px;color:#4F616B;">-15ms (389ms)</div>
<div class="t" style="left:175.20px;top:587.60px;font-size:9.8px;line-height:9.8px;color:#4F6976;">LEADING INDICATORS</div>
<div class="r card" style="left:175px;top:745px;width:700px;height:167px"></div>
<div class="t" style="left:186.80px;top:753.44px;font-size:11.05px;line-height:11.05px;color:#4D6876;">Related Timers</div>
<div class="r" style="left:175px;top:769px;width:700px;height:20px;background:#EEF6FA;"></div>
<div class="t" style="left:325.00px;width:400px;text-align:center;top:770.68px;font-size:7.4px;line-height:7.4px;color:#4F6571;-webkit-text-stroke:0.16px #4F6571;">Page Load</div>
<div class="t" style="left:325.00px;width:400px;text-align:center;top:780.51px;font-size:6.25px;line-height:6.25px;color:#586B75;">2987ms</div>
<div class="r" style="left:175px;top:790px;width:235px;height:20px;background:#CFEEFA;"></div>
<div class="t" style="left:92.50px;width:400px;text-align:center;top:791.68px;font-size:7.4px;line-height:7.4px;color:#4F6571;-webkit-text-stroke:0.16px #4F6571;">Time to First Byte</div>
<div class="t" style="left:92.50px;width:400px;text-align:center;top:801.51px;font-size:6.25px;line-height:6.25px;color:#586B75;">374ms</div>
<div class="r" style="left:411px;top:790px;width:464px;height:20px;background:#EEF6FA;"></div>
<div class="t" style="left:443.00px;width:400px;text-align:center;top:791.68px;font-size:7.4px;line-height:7.4px;color:#4F6571;-webkit-text-stroke:0.16px #4F6571;">Front-End</div>
<div class="t" style="left:443.00px;width:400px;text-align:center;top:801.51px;font-size:6.25px;line-height:6.25px;color:#586B75;">2651ms</div>
<div class="r" style="left:175px;top:811px;width:31px;height:20px;background:#CFEEFA;"></div>
<div class="t" style="left:-9.50px;width:400px;text-align:center;top:812.68px;font-size:7.4px;line-height:7.4px;color:#4F6571;-webkit-text-stroke:0.16px #4F6571;">Unload</div>
<div class="t" style="left:-9.50px;width:400px;text-align:center;top:822.51px;font-size:6.25px;line-height:6.25px;color:#586B75;">20ms</div>
<div class="r" style="left:207px;top:811px;width:40px;height:20px;background:#CFEEFA;"></div>
<div class="t" style="left:27.00px;width:400px;text-align:center;top:812.68px;font-size:7.4px;line-height:7.4px;color:#4F6571;-webkit-text-stroke:0.16px #4F6571;">Redirect</div>
<div class="t" style="left:27.00px;width:400px;text-align:center;top:822.51px;font-size:6.25px;line-height:6.25px;color:#586B75;">117ms</div>
<div class="r" style="left:248px;top:811px;width:21px;height:20px;background:#CFEEFA;"></div>
<div class="t" style="left:58.50px;width:400px;text-align:center;top:812.68px;font-size:7.4px;line-height:7.4px;color:#4F6571;-webkit-text-stroke:0.16px #4F6571;">WS</div>
<div class="t" style="left:58.50px;width:400px;text-align:center;top:822.51px;font-size:6.25px;line-height:6.25px;color:#586B75;">20ms</div>
<div class="r" style="left:270px;top:811px;width:22px;height:20px;background:#CFEEFA;"></div>
<div class="t" style="left:81.00px;width:400px;text-align:center;top:812.68px;font-size:7.4px;line-height:7.4px;color:#4F6571;-webkit-text-stroke:0.16px #4F6571;">DNS</div>
<div class="t" style="left:81.00px;width:400px;text-align:center;top:822.51px;font-size:6.25px;line-height:6.25px;color:#586B75;">23ms</div>
<div class="r" style="left:293px;top:811px;width:27px;height:20px;background:#CFEEFA;"></div>
<div class="t" style="left:106.50px;width:400px;text-align:center;top:812.68px;font-size:7.4px;line-height:7.4px;color:#4F6571;-webkit-text-stroke:0.16px #4F6571;">TCP</div>
<div class="t" style="left:106.50px;width:400px;text-align:center;top:822.51px;font-size:6.25px;line-height:6.25px;color:#586B75;">74ms</div>
<div class="r" style="left:321px;top:811px;width:24px;height:20px;background:#CFEEFA;"></div>
<div class="t" style="left:133.00px;width:400px;text-align:center;top:812.68px;font-size:7.4px;line-height:7.4px;color:#4F6571;-webkit-text-stroke:0.16px #4F6571;">TLS</div>
<div class="t" style="left:133.00px;width:400px;text-align:center;top:822.51px;font-size:6.25px;line-height:6.25px;color:#586B75;">46ms</div>
<div class="r" style="left:346px;top:811px;width:64px;height:20px;background:#CFEEFA;"></div>
<div class="t" style="left:178.00px;width:400px;text-align:center;top:812.68px;font-size:7.4px;line-height:7.4px;color:#4F6571;-webkit-text-stroke:0.16px #4F6571;">Waiting</div>
<div class="t" style="left:178.00px;width:400px;text-align:center;top:822.51px;font-size:6.25px;line-height:6.25px;color:#586B75;">310ms</div>
<div class="r" style="left:411px;top:811px;width:36px;height:20px;background:#EEF6FA;"></div>
<div class="t" style="left:229.00px;width:400px;text-align:center;top:812.68px;font-size:7.4px;line-height:7.4px;color:#4F6571;-webkit-text-stroke:0.16px #4F6571;">Download</div>
<div class="t" style="left:229.00px;width:400px;text-align:center;top:822.51px;font-size:6.25px;line-height:6.25px;color:#586B75;">97ms</div>
<div class="r" style="left:448px;top:811px;width:342px;height:20px;background:#EEF6FA;"></div>
<div class="t" style="left:443.30px;width:400px;text-align:center;top:812.68px;font-size:7.4px;line-height:7.4px;color:#4F6571;-webkit-text-stroke:0.16px #4F6571;">DOM Loading</div>
<div class="t" style="left:443.30px;width:400px;text-align:center;top:822.51px;font-size:6.25px;line-height:6.25px;color:#586B75;">1807ms</div>
<div class="r" style="left:791px;top:811px;width:54px;height:20px;background:#EEF6FA;"></div>
<div class="t" style="left:618.00px;width:400px;text-align:center;top:812.68px;font-size:7.4px;line-height:7.4px;color:#4F6571;-webkit-text-stroke:0.16px #4F6571;">DOM Complete</div>
<div class="t" style="left:618.00px;width:400px;text-align:center;top:822.51px;font-size:6.25px;line-height:6.25px;color:#586B75;">7ms</div>
<div class="r" style="left:846px;top:811px;width:29px;height:20px;background:#EEF6FA;"></div>
<div class="t" style="left:660.50px;width:400px;text-align:center;top:812.68px;font-size:7.4px;line-height:7.4px;color:#4F6571;-webkit-text-stroke:0.16px #4F6571;">onLoad</div>
<div class="t" style="left:660.50px;width:400px;text-align:center;top:822.51px;font-size:6.25px;line-height:6.25px;color:#586B75;">20ms</div>
<div class="r" style="left:346px;top:832px;width:19px;height:19.5px;background:#CFEEFA;"></div>
<div class="t" style="left:155.50px;width:400px;text-align:center;top:833.68px;font-size:7.4px;line-height:7.4px;color:#4F6571;-webkit-text-stroke:0.16px #4F6571;">RTT</div>
<div class="t" style="left:155.50px;width:400px;text-align:center;top:843.51px;font-size:6.25px;line-height:6.25px;color:#586B75;">20ms</div>
<div class="r" style="left:366px;top:832px;width:20px;height:19.5px;background:#CFEEFA;"></div>
<div class="t" style="left:176.00px;width:400px;text-align:center;top:833.68px;font-size:7.4px;line-height:7.4px;color:#4F6571;-webkit-text-stroke:0.16px #4F6571;">Edge</div>
<div class="t" style="left:176.00px;width:400px;text-align:center;top:843.51px;font-size:6.25px;line-height:6.25px;color:#586B75;">20ms</div>
<div class="r" style="left:387px;top:832px;width:23px;height:19.5px;background:#CFEEFA;"></div>
<div class="t" style="left:198.50px;width:400px;text-align:center;top:833.68px;font-size:7.4px;line-height:7.4px;color:#4F6571;-webkit-text-stroke:0.16px #4F6571;">Origin</div>
<div class="t" style="left:198.50px;width:400px;text-align:center;top:843.51px;font-size:6.25px;line-height:6.25px;color:#586B75;">129ms</div>
<div class="r" style="left:175px;top:864px;width:700px;height:19.5px;background:#EEF6FA;"></div>
<div class="t" style="left:325.00px;width:400px;text-align:center;top:865.68px;font-size:7.4px;line-height:7.4px;color:#4F6571;-webkit-text-stroke:0.16px #4F6571;">Visual Loading</div>
<div class="t" style="left:325.00px;width:400px;text-align:center;top:875.51px;font-size:6.25px;line-height:6.25px;color:#586B75;">50ms</div>
<div class="r" style="left:175px;top:884.5px;width:114px;height:19.5px;background:#EEF6FA;"></div>
<div class="t" style="left:34.60px;width:400px;text-align:center;top:886.18px;font-size:7.4px;line-height:7.4px;color:#4F6571;-webkit-text-stroke:0.16px #4F6571;">FP</div>
<div class="t" style="left:34.60px;width:400px;text-align:center;top:896.01px;font-size:6.25px;line-height:6.25px;color:#586B75;">974ms</div>
<div class="r" style="left:290px;top:884.5px;width:99px;height:19.5px;background:#CFEEFA;"></div>
<div class="t" style="left:139.50px;width:400px;text-align:center;top:886.18px;font-size:7.4px;line-height:7.4px;color:#4F6571;-webkit-text-stroke:0.16px #4F6571;">FCP</div>
<div class="t" style="left:139.50px;width:400px;text-align:center;top:896.01px;font-size:6.25px;line-height:6.25px;color:#586B75;">988ms</div>
<div class="r" style="left:390px;top:884.5px;width:235.5px;height:19.5px;background:#B3E7FB;"></div>
<div class="t" style="left:305.80px;width:400px;text-align:center;top:886.18px;font-size:7.4px;line-height:7.4px;color:#4F6571;-webkit-text-stroke:0.16px #4F6571;">LCP (Largest Contentful Paint)</div>
<div class="t" style="left:305.80px;width:400px;text-align:center;top:896.01px;font-size:6.25px;line-height:6.25px;color:#586B75;">2594ms</div>
<div class="r" style="left:626.5px;top:884.5px;width:248.5px;height:19.5px;background:#EEF6FA;"></div>
<div class="t" style="left:545.20px;width:400px;text-align:center;top:886.18px;font-size:7.4px;line-height:7.4px;color:#4F6571;-webkit-text-stroke:0.16px #4F6571;">TTVR</div>
<div class="t" style="left:545.20px;width:400px;text-align:center;top:896.01px;font-size:6.25px;line-height:6.25px;color:#586B75;">2712ms</div>
</div></body></html>
